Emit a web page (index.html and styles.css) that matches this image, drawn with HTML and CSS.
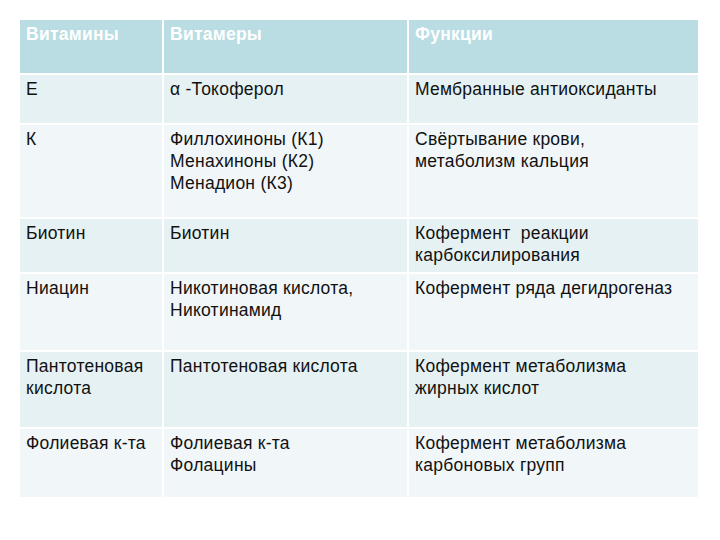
FILE: index.html
```html
<!DOCTYPE html>
<html lang="ru">
<head>
<meta charset="utf-8">
<link rel="stylesheet" href="styles.css">
</head>
<body>
<div class="page">
<table class="vit">
  <colgroup><col class="c1"><col class="c2"><col class="c3"></colgroup>
  <thead>
    <tr class="rh"><th>Витамины</th><th>Витамеры</th><th>Функции</th></tr>
  </thead>
  <tbody>
    <tr class="dark r1"><td>E</td><td>α -Токоферол</td><td>Мембранные антиоксиданты</td></tr>
    <tr class="light r2"><td>К</td><td>Филлохиноны (К1)<br>Менахиноны (К2)<br>Менадион (К3)</td><td>Свёртывание крови,<br>метаболизм кальция</td></tr>
    <tr class="dark r3"><td>Биотин</td><td>Биотин</td><td>Кофермент&nbsp; реакции<br>карбоксилирования</td></tr>
    <tr class="light r4"><td>Ниацин</td><td>Никотиновая кислота,<br>Никотинамид</td><td>Кофермент ряда дегидрогеназ</td></tr>
    <tr class="dark r5"><td>Пантотеновая<br>кислота</td><td>Пантотеновая кислота</td><td>Кофермент метаболизма<br>жирных кислот</td></tr>
    <tr class="light r6"><td>Фолиевая к-та</td><td>Фолиевая к-та<br>Фолацины</td><td>Кофермент метаболизма<br>карбоновых групп</td></tr>
  </tbody>
</table>
</div>
</body>
</html>
```
FILE: styles.css
```css
html, body {
  margin: 0;
  padding: 0;
  background: #ffffff;
}
.page {
  padding: 18px 0 0 18px;
}
.vit {
  border-collapse: collapse;
  table-layout: fixed;
  width: 680px;
  font-family: "Liberation Sans", Arial, sans-serif;
  font-size: 17.5px;
  letter-spacing: 0.25px;
  color: #111111;
}
.c1 { width: 144px; }
.c2 { width: 245px; }
.c3 { width: 291px; }
.vit th, .vit td {
  border: 2px solid #ffffff;
  text-align: left;
  vertical-align: top;
  padding: 3px 4px 0 6px;
  line-height: 22px;
  white-space: nowrap;
}
.vit th {
  background: #b9dde3;
  color: #ffffff;
  font-weight: bold;
  padding-top: 3px;
}
.dark td { background: #e6f1f3; }
.light td { background: #f1f6f9; }
.rh { height: 55px; }
.r1 { height: 50px; }
.r2 { height: 94px; }
.r3 { height: 55px; }
.r4 { height: 78px; }
.r5 { height: 77px; }
.r6 { height: 70px; }
```
